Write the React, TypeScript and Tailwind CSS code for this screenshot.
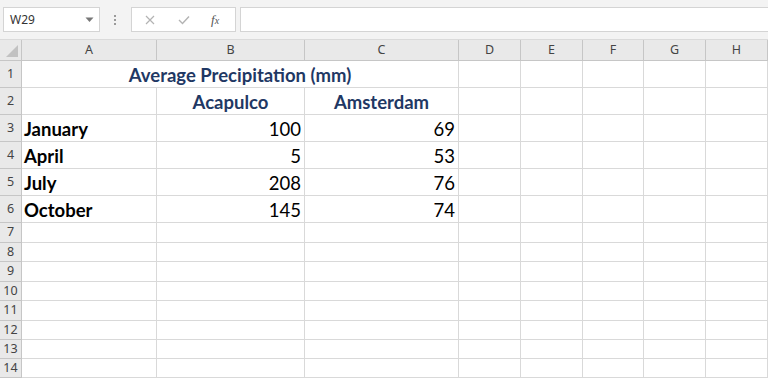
const cols = ['A', 'B', 'C', 'D', 'E', 'F', 'G', 'H'];

const data = [
  { month: 'January', a: '100', b: '69' },
  { month: 'April', a: '5', b: '53' },
  { month: 'July', a: '208', b: '76' },
  { month: 'October', a: '145', b: '74' },
];

const emptyRows = [
  { n: 7, h: 'h-[20px]' },
  { n: 8, h: 'h-[19px]' },
  { n: 9, h: 'h-[20px]' },
  { n: 10, h: 'h-[19px]' },
  { n: 11, h: 'h-[20px]' },
  { n: 12, h: 'h-[19px]' },
  { n: 13, h: 'h-[19px]' },
  { n: 14, h: 'h-[19px]' },
];

const cell = 'border-r border-b border-[#d9d9d9] bg-white';
const rowHead =
  'flex items-center justify-center border-r border-b border-[#c6c6c6] bg-[#e9e9e9] text-[12.5px] leading-none text-[#444]';
const cellText = 'font-["Lato",sans-serif] text-[18.5px] leading-none font-bold pt-[3px]';
const numText = 'font-["Lato",sans-serif] text-[18.5px] leading-none text-black pt-[3px]';

function EmptyCells({ from }: { from: number }) {
  return (
    <>
      {cols.slice(from).map((c) => (
        <div key={c} className={cell} />
      ))}
    </>
  );
}

export default function App() {
  return (
    <div className="w-[768px] h-[380px] overflow-hidden bg-white font-['Noto_Sans',sans-serif]">
      {/* formula bar */}
      <div className="h-[40px] bg-[#f3f3f3] flex items-center pl-[3px] border-b border-[#dadada]">
        <div className="w-[97px] h-[25px] bg-white border border-[#d4d4d4] flex items-center justify-between pl-[6px] pr-[4px] text-[12px] text-[#333]">
          <span>W29</span>
          <svg width="9" height="6" viewBox="0 0 9 6" className="mr-[1px]">
            <path d="M0.5 0.5 L8.5 0.5 L4.5 5 Z" fill="#777" />
          </svg>
        </div>
        <div className="w-[31px] flex flex-col items-center gap-[2px] pr-[2px]">
          <span className="w-[2px] h-[2px] bg-[#9a9a9a]" />
          <span className="w-[2px] h-[2px] bg-[#9a9a9a]" />
          <span className="w-[2px] h-[2px] bg-[#9a9a9a]" />
        </div>
        <div className="w-[105px] h-[25px] bg-white border border-[#d4d4d4] flex items-center pl-[13px]">
          <svg width="10" height="10" viewBox="0 0 10 10">
            <path d="M1 1 L9 9 M9 1 L1 9" stroke="#b3b3b3" strokeWidth="1.2" />
          </svg>
          <svg width="12" height="10" viewBox="0 0 12 10" className="ml-[23px]">
            <path d="M1 5 L4.5 8.5 L11 1.5" stroke="#b3b3b3" strokeWidth="1.4" fill="none" />
          </svg>
          <span className="ml-[21px] font-['Liberation_Serif',serif] italic text-[13px] text-[#555] leading-none">
            f<span className="text-[10px]">x</span>
          </span>
        </div>
        <div className="ml-[4px] flex-1 h-[25px] bg-white border border-[#d4d4d4] border-r-0" />
      </div>

      {/* grid */}
      <div className="grid grid-cols-[22px_135px_148px_154px_62px_62px_61px_62px_62px]">
        {/* column headers */}
        <div className="h-[21px] bg-[#e9e9e9] border-r border-b border-[#c6c6c6] relative">
          <svg width="12" height="12" viewBox="0 0 12 12" className="absolute right-[3px] bottom-[3px]">
            <path d="M12 0 L12 12 L0 12 Z" fill="#c2c2c2" />
          </svg>
        </div>
        {cols.map((c) => (
          <div
            key={c}
            className="h-[21px] bg-[#e9e9e9] border-r border-b border-[#c6c6c6] flex items-center justify-center text-[12.5px] text-[#444]"
          >
            {c}
          </div>
        ))}

        {/* row 1 */}
        <div className={`${rowHead} h-[27px]`}>1</div>
        <div className={`col-span-3 ${cell} flex items-center justify-center ${cellText} text-[#1f3864]`}>
          Average Precipitation (mm)
        </div>
        <EmptyCells from={3} />

        {/* row 2 */}
        <div className={`${rowHead} h-[27px]`}>2</div>
        <div className={cell} />
        <div className={`${cell} flex items-center justify-center ${cellText} text-[#1f3864]`}>Acapulco</div>
        <div className={`${cell} flex items-center justify-center ${cellText} text-[#1f3864]`}>Amsterdam</div>
        <EmptyCells from={3} />

        {data.map((r, i) => (
          <div key={r.month} className="contents">
            <div className={`${rowHead} h-[27px]`}>{i + 3}</div>
            <div className={`${cell} flex items-center pl-[2px] ${cellText} text-black`}>{r.month}</div>
            <div className={`${cell} flex items-center justify-end pr-[3px] ${numText}`}>{r.a}</div>
            <div className={`${cell} flex items-center justify-end pr-[3px] ${numText}`}>{r.b}</div>
            <EmptyCells from={3} />
          </div>
        ))}

        {emptyRows.map((r) => (
          <div key={r.n} className="contents">
            <div className={`${rowHead} ${r.h}`}>{r.n}</div>
            <EmptyCells from={0} />
          </div>
        ))}
      </div>
    </div>
  );
}
